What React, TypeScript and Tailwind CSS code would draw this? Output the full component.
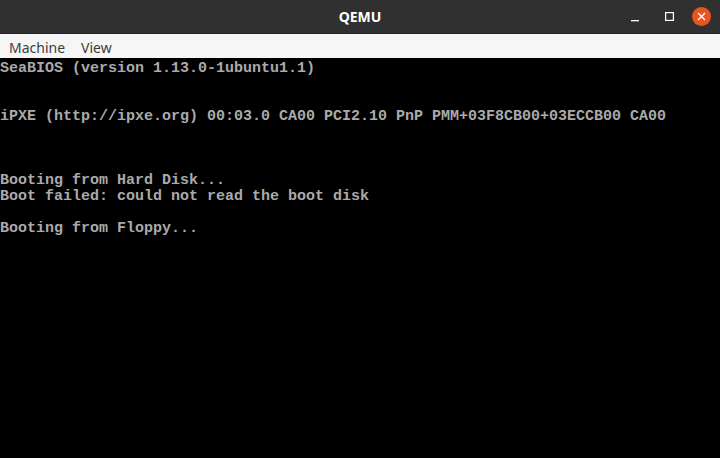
const lines = [
  'SeaBIOS (version 1.13.0-1ubuntu1.1)',
  '',
  '',
  'iPXE (http://ipxe.org) 00:03.0 CA00 PCI2.10 PnP PMM+03F8CB00+03ECCB00 CA00',
  '',
  '',
  '',
  'Booting from Hard Disk...',
  'Boot failed: could not read the boot disk',
  '',
  'Booting from Floppy...',
];

export default function App() {
  return (
    <div className="w-[720px] h-[458px] flex flex-col bg-black overflow-hidden">
      {/* Title bar */}
      <div className="h-[34px] shrink-0 bg-[#303030] border-b border-[#242424] flex items-center relative">
        <span className="flex-1 text-center text-white font-bold text-[14px] font-['Noto_Sans',sans-serif]">QEMU</span>
        <div className="absolute right-[9px] top-0 h-full flex items-center">
          <svg width="8" height="9" viewBox="0 0 8 9" className="mt-[2px] mr-[26px]">
            <rect x="0" y="7" width="8" height="1.3" fill="#ffffff" />
          </svg>
          <svg width="9" height="9" viewBox="0 0 9 9" className="mr-[18px]">
            <rect x="0.6" y="0.6" width="7.8" height="7.8" fill="none" stroke="#ffffff" strokeWidth="1.2" />
          </svg>
          <div className="w-[19px] h-[19px] rounded-full bg-[#e95420] flex items-center justify-center">
            <svg width="9" height="9" viewBox="0 0 9 9">
              <path d="M1 1 L8 8 M8 1 L1 8" stroke="#ffffff" strokeWidth="1.4" />
            </svg>
          </div>
        </div>
      </div>

      {/* Menu bar */}
      <div className="h-[24px] shrink-0 bg-[#f6f6f6] flex items-center gap-[16px] px-[9px] pt-[2px] text-[14px] text-[#3c3c3c] font-['Noto_Sans',sans-serif]">
        <span>Machine</span>
        <span>View</span>
      </div>

      {/* VGA screen */}
      <div className="flex-1 bg-black pt-[3px] font-['Liberation_Mono',monospace] text-[15px] leading-[16px] font-bold text-[#aaaaaa] whitespace-pre">
        {lines.map((l, i) => (
          <div key={i} className="h-[16px]">{l}</div>
        ))}
      </div>
    </div>
  );
}
